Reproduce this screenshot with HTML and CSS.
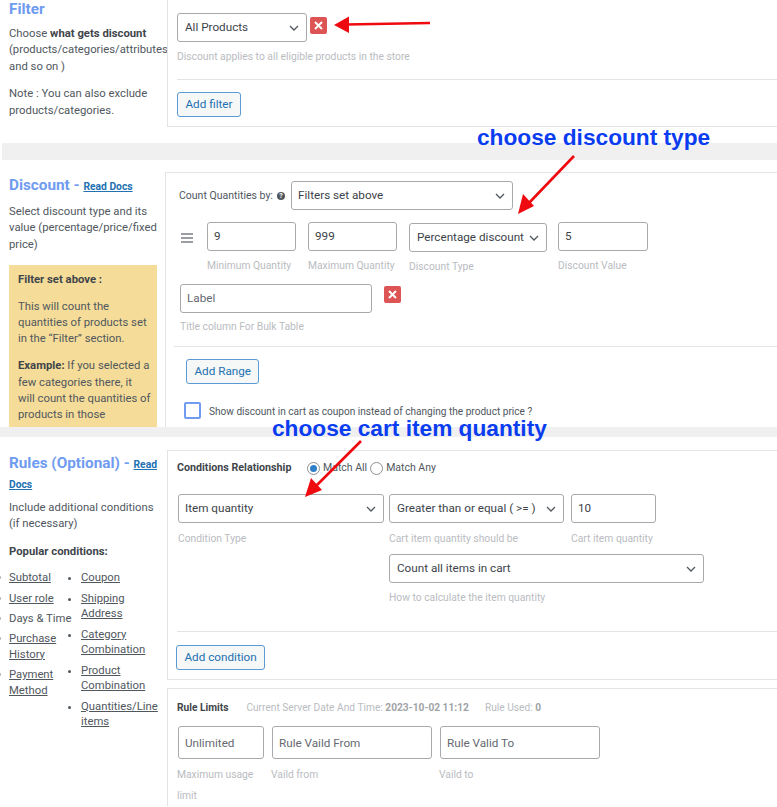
FILE: index.html
```html
<!DOCTYPE html>
<html lang="en">
<head>
    <meta charset="UTF-8">
    <meta name="viewport" content="width=device-width, initial-scale=1.0">
    <title>Discount Rule</title>
    <link rel="stylesheet" href="styles.css">
</head>
<body>
<div class="page">

    <!-- Filter -->
    <section class="section filter-section">
        <div class="side">
            <h2 class="side-title">Filter</h2>
            <p>Choose <b>what gets discount</b><br>(products/categories/attributes,<br>and so on )</p>
            <p>Note : You can also exclude products/categories.</p>
        </div>
        <div class="panel filter-panel">
            <div class="filter-row">
                <div class="field filter-field">
                    <select class="control"><option>All Products</option></select>
                </div>
                <button class="del-btn"><svg width="9" height="9" viewBox="0 0 9 9"><path d="M1 1l7 7M8 1l-7 7" stroke="#fff" stroke-width="2"/></svg></button>
            </div>
            <div class="hint">Discount applies to all eligible products in the store</div>
            <hr class="rule filter-rule">
            <button class="add-btn">Add filter</button>
        </div>
    </section>
    <div class="band band-one"></div>

    <!-- Discount -->
    <section class="section discount-section">
        <div class="side">
            <h2 class="side-title">Discount - <a href="#" class="docs">Read Docs</a></h2>
            <p>Select discount type and its value (percentage/price/fixed price)</p>
            <div class="note">
                <p><b>Filter set above :</b></p>
                <p>This will count the quantities of products set in the “Filter” section.</p>
                <p><b>Example:</b> If you selected a few categories there, it<br>will count the quantities of products in those categories added in cart. If</p>
            </div>
        </div>
        <div class="panel discount-panel">
            <div class="count-row">
                <span class="count-label">Count Quantities by:</span>
                <span class="help">?</span>
                <select class="control count-select"><option>Filters set above</option></select>
            </div>
            <div class="range-row">
                <span class="drag"><i></i><i></i><i></i></span>
                <div class="field qty-field">
                    <input class="control" value="9">
                    <div class="hint">Minimum Quantity</div>
                </div>
                <div class="field qty-field">
                    <input class="control" value="999">
                    <div class="hint">Maximum Quantity</div>
                </div>
                <div class="field type-field">
                    <select class="control"><option>Percentage discount</option></select>
                    <div class="hint">Discount Type</div>
                </div>
                <div class="field value-field">
                    <input class="control" value="5">
                    <div class="hint">Discount Value</div>
                </div>
            </div>
            <div class="label-row">
                <div class="field label-field">
                    <input class="control" placeholder="Label">
                    <div class="hint">Title column For Bulk Table</div>
                </div>
                <button class="del-btn"><svg width="9" height="9" viewBox="0 0 9 9"><path d="M1 1l7 7M8 1l-7 7" stroke="#fff" stroke-width="2"/></svg></button>
            </div>
            <hr class="rule range-rule">
            <button class="add-btn range-btn">Add Range</button>
            <label class="coupon-row">
                <span class="check"></span>
                <span class="coupon-text">Show discount in cart as coupon instead of changing the product price ?</span>
            </label>
        </div>
    </section>
    <div class="band band-two"></div>

    <!-- Rules -->
    <section class="section rules-section">
        <div class="side">
            <h2 class="side-title">Rules (Optional) - <a href="#" class="docs">Read Docs</a></h2>
            <p>Include additional conditions (if necessary)</p>
            <p class="popular"><b>Popular conditions:</b></p>
            <div class="popular-lists">
                <ul class="list-one">
                    <li><a href="#">Subtotal</a></li>
                    <li><a href="#">User role</a></li>
                    <li>Days &amp; Time</li>
                    <li><a href="#">Purchase History</a></li>
                    <li><a href="#">Payment Method</a></li>
                </ul>
                <ul class="list-two">
                    <li><a href="#">Coupon</a></li>
                    <li><a href="#">Shipping Address</a></li>
                    <li><a href="#">Category Combination</a></li>
                    <li><a href="#">Product Combination</a></li>
                    <li><a href="#">Quantities/Line items</a></li>
                </ul>
            </div>
        </div>
        <div class="rules-main">
            <div class="panel rules-panel">
                <div class="relation-row">
                    <b class="relation-label">Conditions Relationship</b>
                    <span class="radio radio-on"></span><span class="radio-text">Match All</span>
                    <span class="radio"></span><span class="radio-text">Match Any</span>
                </div>
                <div class="condition-row">
                    <div class="field cond-type">
                        <select class="control"><option>Item quantity</option></select>
                        <div class="hint">Condition Type</div>
                    </div>
                    <div class="cond-middle">
                        <div class="cond-top">
                            <div class="field cond-op">
                                <select class="control"><option>Greater than or equal ( &gt;= )</option></select>
                                <div class="hint">Cart item quantity should be</div>
                            </div>
                            <div class="field cond-qty">
                                <input class="control" value="10">
                                <div class="hint">Cart item quantity</div>
                            </div>
                        </div>
                        <div class="field cond-calc">
                            <select class="control"><option>Count all items in cart</option></select>
                            <div class="hint">How to calculate the item quantity</div>
                        </div>
                    </div>
                    <span class="del-edge"></span>
                </div>
                <hr class="rule cond-rule">
                <button class="add-btn cond-btn">Add condition</button>
            </div>
            <div class="panel limits-panel">
                <div class="limits-head">
                    <b class="limits-title">Rule Limits</b>
                    <span>Current Server Date And Time: <b>2023-10-02 11:12</b></span>
                    <span>Rule Used: <b>0</b></span>
                </div>
                <div class="limits-row">
                    <div class="field limit-usage">
                        <input class="control" placeholder="Unlimited">
                        <div class="hint">Maximum usage limit</div>
                    </div>
                    <div class="field limit-date">
                        <input class="control" placeholder="Rule Vaild From">
                        <div class="hint">Vaild from</div>
                    </div>
                    <div class="field limit-date">
                        <input class="control" placeholder="Rule Valid To">
                        <div class="hint">Vaild to</div>
                    </div>
                </div>
            </div>
        </div>
    </section>

    <!-- annotations drawn on top of the screenshot -->
    <div class="annot annot-type">choose discount type</div>
    <div class="annot annot-qty">choose cart item quantity</div>
    <svg class="arrows" width="777" height="807" viewBox="0 0 777 807">
        <g stroke="#ee0a0f" stroke-width="2.6" fill="none">
            <path d="M430 23 L346 24.5"/>
            <path d="M574 156 L528 204"/>
            <path d="M361 441 L315 487"/>
        </g>
        <g fill="#ee0a0f">
            <path d="M334 25 L349 16.5 L349 33 Z"/>
            <path d="M518 214 L523 194 L534 206 Z"/>
            <path d="M305 497 L311 478 L322 490 Z"/>
        </g>
    </svg>
</div>
</body>
</html>
```

FILE: styles.css
```css
* {
    box-sizing: border-box;
}
body {
    margin: 0;
    background: #fff;
    color: #50575e;
    font-family: Roboto, Arial, sans-serif;
    font-size: 11.3px;
    line-height: 16.4px;
}
.page {
    position: relative;
    width: 777px;
    height: 807px;
    overflow: hidden;
}
p {
    margin: 0 0 11px;
}
b {
    color: #3f454b;
}
.rule {
    height: 1px;
    margin: 0;
    border: 0;
    background: #e4e4e4;
}

/* sections */
.section {
    display: flex;
    overflow: hidden;
}
.filter-section {
    height: 143px;
}
.discount-section {
    height: 267px;
}
.rules-section {
    height: 370px;
}
.band {
    background: #f0f0f1;
}
.band-one {
    height: 17px;
    margin-left: 2px;
}
.band-two {
    height: 10px;
}

/* left column */
.side {
    flex: 0 0 167px;
    width: 167px;
    padding-left: 9px;
    overflow: hidden;
}
.side-title {
    margin: 0 0 8px;
    color: #6f9bf0;
    font-size: 15.3px;
    line-height: 18px;
    font-weight: 700;
}
.discount-section .side {
    flex-basis: 165px;
    width: 165px;
    padding-top: 16px;
}
.rules-section .side {
    padding-top: 17px;
}
.rules-section .side-title {
    margin-bottom: 6px;
}
.rules-section p {
    padding-right: 4px;
}
.docs {
    color: #2271b1;
    font-size: 10.3px;
}
.note {
    width: 148px;
    padding: 7px 5px 7px 9px;
    background: #f5dc98;
    margin-top: 11.5px;
}
.note p {
    margin-bottom: 10.4px;
}
p.popular {
    margin: 10px 0;
}
.popular-lists {
    display: flex;
    margin-top: 10px;
    padding-right: 4px;
}
.popular-lists ul {
    margin: 0;
    padding: 0;
}
.popular-lists li {
    margin-bottom: 4.6px;
    line-height: 15.7px;
}
.popular-lists a {
    color: #50575e;
}
.list-one {
    flex: 0 0 72px;
    list-style: none;
}
.list-one li {
    position: relative;
}
.list-one li::before {
    content: "";
    position: absolute;
    left: -11px;
    top: 6px;
    width: 3px;
    height: 3px;
    border-radius: 50%;
    background: #a7aaad;
}
.list-two {
    list-style: disc;
}

/* right panels */
.panel {
    flex: 1;
    border: 1px solid #e4e4e4;
    border-right: 0;
    background: #fff;
}
.filter-panel {
    flex: 1;
    height: 127px;
    padding: 13px 0 0 9px;
    border-top: 0;
}
.filter-row {
    display: flex;
    align-items: flex-start;
}
.filter-field {
    flex: 0 0 130px;
}
.filter-row .del-btn {
    margin: 4px 0 0 3px;
}
.filter-rule {
    margin-top: 14px;
}
.filter-panel .add-btn {
    margin-top: 12px;
}
.discount-panel {
    height: 267px;
    margin-top: 12px;
    padding: 8px 0 0 13px;
    border-bottom: 0;
}

/* form bits */
.field {
    display: flex;
    flex-direction: column;
}
.control {
    display: block;
    width: 100%;
    height: 29px;
    padding: 0 6px 2px;
    border: 1px solid #a7aaad;
    border-radius: 3px;
    background: #fff;
    color: #3c434a;
    font-family: inherit;
    font-size: 11.7px;
    outline: 0;
}
.control::placeholder {
    color: #646970;
    opacity: 1;
}
select.control {
    -webkit-appearance: none;
    appearance: none;
    padding: 0 20px 2px 7px;
    background: #fff url("data:image/svg+xml,%3Csvg xmlns='http://www.w3.org/2000/svg' width='10' height='6' viewBox='0 0 10 6'%3E%3Cpath d='M1 1l4 4 4-4' fill='none' stroke='%2350575e' stroke-width='1.3'/%3E%3C/svg%3E") no-repeat right 7px center;
}
.hint {
    margin-top: 7px;
    color: #b9bcbf;
    font-size: 10.3px;
    line-height: 16px;
    white-space: nowrap;
}
.del-btn {
    flex: none;
    display: flex;
    align-items: center;
    justify-content: center;
    width: 17px;
    height: 17px;
    padding: 0;
    border: 0;
    border-radius: 2px;
    background: #dc5454;
}
.add-btn {
    display: block;
    height: 25px;
    padding: 0 7.5px;
    border: 1px solid #5b9bd5;
    border-radius: 3px;
    background: #f6f7f7;
    color: #2271b1;
    font-family: inherit;
    font-size: 11.7px;
    line-height: 23px;
}

/* discount panel */
.count-row {
    display: flex;
    align-items: center;
}
.count-label {
    width: 93px;
    padding-top: 1px;
    font-size: 10.5px;
    white-space: nowrap;
}
.help {
    width: 8px;
    height: 8px;
    margin: 0 6px 0 5px;
    border-radius: 50%;
    background: #50575e;
    color: #fff;
    font-size: 7px;
    font-weight: 700;
    line-height: 8px;
    text-align: center;
}
select.count-select {
    width: 222px;
    padding-left: 6px;
}
.range-row {
    display: flex;
    align-items: flex-start;
    margin-top: 12px;
}
.drag {
    display: flex;
    flex-direction: column;
    gap: 2px;
    width: 12px;
    margin: 11px 14px 0 2px;
}
.drag i {
    display: block;
    height: 2px;
    background: #9a9da1;
}
.qty-field {
    flex: 0 0 89px;
    margin-right: 12px;
}
.type-field {
    flex: 0 0 138px;
    margin: 1px 11px 0 0;
}
.type-field select.control {
    padding-right: 16px;
}
.value-field {
    flex: 0 0 90px;
}
.label-row {
    display: flex;
    align-items: flex-start;
    margin-top: 9px;
}
.label-field {
    flex: 0 0 192px;
    margin-left: 1px;
}
.label-field .hint {
    margin-top: 6px;
}
.label-row .del-btn {
    margin: 2px 0 0 12px;
}
.range-rule {
    margin: 11px 0 0 -5px;
}
.range-btn {
    margin: 12px 0 0 7px;
}
.coupon-row {
    display: flex;
    align-items: center;
    gap: 8px;
    margin: 17px 0 0 5px;
    font-size: 10.1px;
    white-space: nowrap;
}
.coupon-text {
    padding-top: 3px;
}
.check {
    flex: none;
    width: 17px;
    height: 17px;
    border: 2px solid #6f9bf0;
    border-radius: 2px;
}

/* rules */
.rules-main {
    flex: 1;
    min-width: 0;
    display: flex;
    flex-direction: column;
    padding-top: 13px;
}
.rules-panel {
    flex: none;
    height: 230px;
    padding: 9px 0 0 9px;
}
.relation-row {
    display: flex;
    align-items: center;
    font-size: 10.5px;
}
.relation-label {
    width: 130px;
    font-size: 10.7px;
    white-space: nowrap;
}
.radio {
    flex: none;
    position: relative;
    width: 13px;
    height: 13px;
    border: 1px solid #8c8f94;
    border-radius: 50%;
}
.radio-on::after {
    content: "";
    position: absolute;
    left: 2px;
    top: 2px;
    width: 7px;
    height: 7px;
    border-radius: 50%;
    background: #2f7fc9;
}
.radio-text {
    margin: 0 3px 0 3px;
}
.condition-row {
    display: flex;
    align-items: flex-start;
    margin-top: 18px;
    position: relative;
}
.condition-row .hint {
    margin-top: 8px;
}
.cond-type {
    flex: 0 0 206px;
    margin: 0 5px 0 1px;
}
.cond-type select.control {
    padding-left: 6px;
}
.cond-middle {
    display: flex;
    flex-direction: column;
    gap: 7px;
}
.cond-top {
    display: flex;
    gap: 7px;
}
.cond-op {
    width: 175px;
}
.cond-op select.control {
    padding-right: 16px;
}
.cond-qty {
    width: 85px;
}
.cond-calc {
    width: 315px;
}
.condition-row .cond-calc .hint {
    margin-top: 7px;
}
.del-edge {
    position: absolute;
    left: 605px;
    top: 4px;
    width: 8px;
    height: 18px;
    border-radius: 2px;
    background: #dc5454;
}
.cond-rule {
    margin-top: 25px;
}
.cond-btn {
    margin: 13px 0 0 -1px;
}
.limits-panel {
    flex: none;
    margin-top: 8px;
    padding: 11px 0 0 9px;
    border-bottom: 0;
}
.limits-head {
    display: flex;
    gap: 16px;
    color: #b9bcbf;
    font-size: 10.2px;
    white-space: nowrap;
}
.limits-head b {
    color: #a0a3a6;
}
.limits-head .limits-title {
    color: #3f454b;
    margin-right: 2px;
}
.limits-row {
    display: flex;
    gap: 8px;
    margin-top: 10px;
}
.limits-row .control {
    height: 33px;
    padding-bottom: 0;
    margin-left: 1px;
}
.limits-row .hint {
    margin-top: 5px;
    line-height: 21px;
    white-space: normal;
}
.limit-usage {
    flex: 0 0 86px;
}
.limit-date {
    flex: 0 0 160px;
}

/* annotations */
.annot {
    position: absolute;
    color: #0a3cf0;
    font-family: "Liberation Sans", Arial, sans-serif;
    font-size: 22.7px;
    font-weight: 700;
    line-height: 26px;
    white-space: nowrap;
}
.annot-type {
    left: 477px;
    top: 124px;
}
.annot-qty {
    left: 272px;
    top: 415px;
}
.arrows {
    position: absolute;
    left: 0;
    top: 0;
    pointer-events: none;
}
```
